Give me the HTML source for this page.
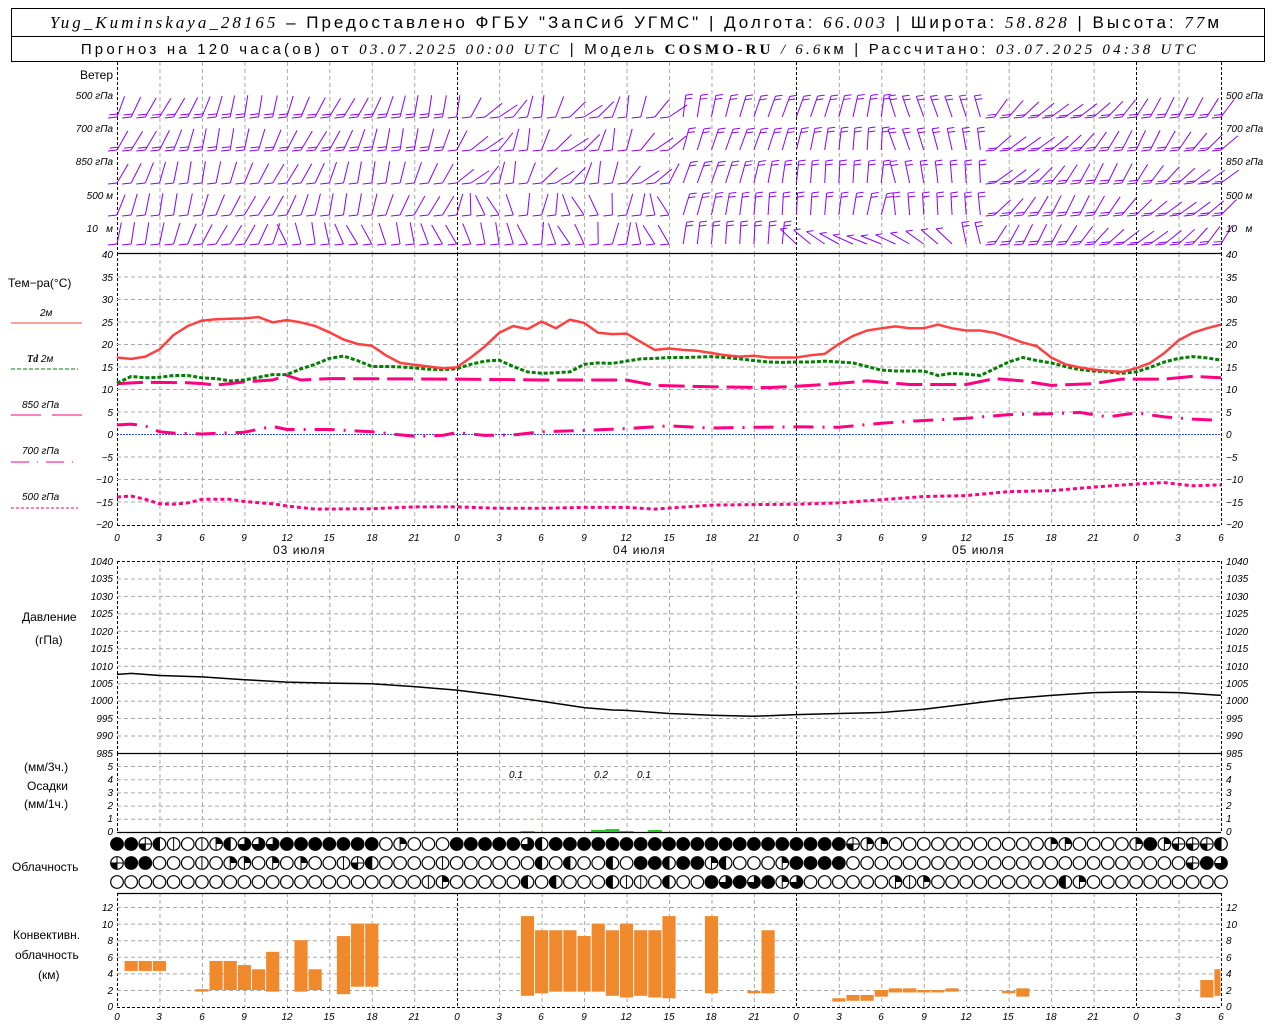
<!DOCTYPE html>
<html><head><meta charset="utf-8"><style>
html,body{margin:0;padding:0;background:#fff;}
svg{display:block;font-family:"Liberation Sans",sans-serif;}
.t{font-size:10px;font-style:italic;fill:#000;}
.l{font-size:12px;fill:#000;}
.hd{font-size:17px;fill:#000;}
.hd2{font-size:15px;fill:#000;}
.it{font-family:"Liberation Serif",serif;font-style:italic;}
</style></head><body>
<svg id="s" width="1280" height="1024" viewBox="0 0 1280 1024" xmlns="http://www.w3.org/2000/svg">
<rect x="0" y="0" width="1280" height="1024" fill="#fff"/>
<g id="g"></g>
<rect x="11.5" y="8.5" width="1253" height="53" fill="none" stroke="#000"/>
<line x1="11" y1="36.5" x2="1265" y2="36.5" stroke="#000"/>
<text class="hd" x="636" y="28" text-anchor="middle" letter-spacing="3.0"><tspan class="it">Yug_Kuminskaya_28165</tspan> – Предоставлено ФГБУ "ЗапСиб УГМС" | Долгота: <tspan class="it">66.003</tspan> | Широта: <tspan class="it">58.828</tspan> | Высота: <tspan class="it">77</tspan>м</text>
<text class="hd2" x="640" y="54" text-anchor="middle" letter-spacing="3.2"><tspan>Прогноз на 120 часа(ов) от </tspan><tspan class="it">03.07.2025 00:00 UTC</tspan> | Модель <tspan font-family="Liberation Serif" font-weight="bold">COSMO-RU</tspan> <tspan class="it">/ 6.6</tspan>км | Рассчитано: <tspan class="it">03.07.2025 04:38 UTC</tspan></text>
<text class="l" x="113" y="79" text-anchor="end">Ветер</text>
<g class="t">
<text x="113" y="99" text-anchor="end">500 гПа</text>
<text x="113" y="132" text-anchor="end">700 гПа</text>
<text x="113" y="165" text-anchor="end">850 гПа</text>
<text x="113" y="199" text-anchor="end">500 м</text>
<text x="113" y="232" text-anchor="end">10 &#160;&#160;м</text>
<text x="1226" y="99">500 гПа</text>
<text x="1226" y="132">700 гПа</text>
<text x="1226" y="165">850 гПа</text>
<text x="1226" y="199">500 м</text>
<text x="1226" y="232">10 &#160;&#160;м</text>
</g>
<text class="l" x="8" y="287">Тем−ра(°C)</text>
<text class="t" x="40" y="316" font-style="normal">2м</text>
<line x1="11" y1="323" x2="82" y2="323" stroke="#ff4040"/>
<text class="t" x="27" y="362"><tspan font-weight="bold" class="it">Td</tspan>  2м</text>
<line x1="11" y1="369" x2="78" y2="369" stroke="#008000" stroke-dasharray="4 2"/>
<text class="t" x="22" y="408">850 гПа</text>
<line x1="11" y1="415" x2="82" y2="415" stroke="#ff0080" stroke-dasharray="30 11"/>
<text class="t" x="22" y="454">700 гПа</text>
<line x1="11" y1="462" x2="78" y2="462" stroke="#ff0080" stroke-dasharray="18 8 1 8"/>
<text class="t" x="22" y="500">500 гПа</text>
<line x1="11" y1="508" x2="78" y2="508" stroke="#ff0080" stroke-dasharray="3 2"/>
<text class="l" x="22" y="621">Давление</text>
<text class="l" x="35" y="644">(гПа)</text>
<text class="l" x="24" y="771">(мм/3ч.)</text>
<text class="l" x="27" y="790">Осадки</text>
<text class="l" x="24" y="808">(мм/1ч.)</text>
<text class="l" x="12" y="871">Облачность</text>
<text class="l" x="13" y="939">Конвективн.</text>
<text class="l" x="15" y="959">облачность</text>
<text class="l" x="38" y="979">(км)</text>
<g class="t" text-anchor="end">
<text x="113" y="258">40</text><text x="113" y="281">35</text><text x="113" y="303">30</text><text x="113" y="326">25</text><text x="113" y="348">20</text><text x="113" y="371">15</text><text x="113" y="393">10</text><text x="113" y="416">5</text><text x="113" y="438">0</text><text x="113" y="461">−5</text><text x="113" y="483">−10</text><text x="113" y="506">−15</text><text x="113" y="528">−20</text>
</g>
<g class="t">
<text x="1226" y="258">40</text><text x="1226" y="281">35</text><text x="1226" y="303">30</text><text x="1226" y="326">25</text><text x="1226" y="348">20</text><text x="1226" y="371">15</text><text x="1226" y="393">10</text><text x="1226" y="416">5</text><text x="1226" y="438">0</text><text x="1226" y="461">−5</text><text x="1226" y="483">−10</text><text x="1226" y="506">−15</text><text x="1226" y="528">−20</text>
</g>
<g class="t" text-anchor="end" font-size="9">
<text x="113" y="565">1040</text><text x="113" y="582">1035</text><text x="113" y="600">1030</text><text x="113" y="617">1025</text><text x="113" y="635">1020</text><text x="113" y="652">1015</text><text x="113" y="670">1010</text><text x="113" y="687">1005</text><text x="113" y="704">1000</text><text x="113" y="722">995</text><text x="113" y="739">990</text><text x="113" y="757">985</text>
</g>
<g class="t" font-size="9">
<text x="1226" y="565">1040</text><text x="1226" y="582">1035</text><text x="1226" y="600">1030</text><text x="1226" y="617">1025</text><text x="1226" y="635">1020</text><text x="1226" y="652">1015</text><text x="1226" y="670">1010</text><text x="1226" y="687">1005</text><text x="1226" y="704">1000</text><text x="1226" y="722">995</text><text x="1226" y="739">990</text><text x="1226" y="757">985</text>
</g>
<g class="t" text-anchor="end" font-size="9">
<text x="113" y="770">5</text><text x="113" y="783">4</text><text x="113" y="796">3</text><text x="113" y="809">2</text><text x="113" y="822">1</text><text x="113" y="835">0</text>
</g>
<g class="t" font-size="9">
<text x="1226" y="770">5</text><text x="1226" y="783">4</text><text x="1226" y="796">3</text><text x="1226" y="809">2</text><text x="1226" y="822">1</text><text x="1226" y="835">0</text>
</g>
<g class="t" font-size="13"><text x="509" y="778">0.1</text><text x="594" y="778">0.2</text><text x="637" y="778">0.1</text></g>
<g class="t" text-anchor="end">
<text x="113" y="911">12</text><text x="113" y="928">10</text><text x="113" y="944">8</text><text x="113" y="961">6</text><text x="113" y="977">4</text><text x="113" y="994">2</text><text x="113" y="1010">0</text>
</g>
<g class="t">
<text x="1226" y="911">12</text><text x="1226" y="928">10</text><text x="1226" y="944">8</text><text x="1226" y="961">6</text><text x="1226" y="977">4</text><text x="1226" y="994">2</text><text x="1226" y="1010">0</text>
</g>
<g class="t" font-size="15" text-anchor="middle">
<text x="117" y="541">0</text><text x="159" y="541">3</text><text x="202" y="541">6</text><text x="244" y="541">9</text><text x="287" y="541">12</text><text x="329" y="541">15</text><text x="372" y="541">18</text><text x="414" y="541">21</text>
<text x="457" y="541">0</text><text x="499" y="541">3</text><text x="541" y="541">6</text><text x="584" y="541">9</text><text x="626" y="541">12</text><text x="669" y="541">15</text><text x="711" y="541">18</text><text x="754" y="541">21</text>
<text x="796" y="541">0</text><text x="839" y="541">3</text><text x="881" y="541">6</text><text x="924" y="541">9</text><text x="966" y="541">12</text><text x="1008" y="541">15</text><text x="1051" y="541">18</text><text x="1093" y="541">21</text>
<text x="1136" y="541">0</text><text x="1178" y="541">3</text><text x="1221" y="541">6</text>
</g>
<g class="l" font-size="14"><text x="273" y="554" letter-spacing="1">03 <tspan font-size="12">июля</tspan></text><text x="613" y="554" letter-spacing="1">04 <tspan font-size="12">июля</tspan></text><text x="952" y="554" letter-spacing="1">05 <tspan font-size="12">июля</tspan></text></g>
<g class="t" font-size="15" text-anchor="middle">
<text x="117" y="1020">0</text><text x="159" y="1020">3</text><text x="202" y="1020">6</text><text x="244" y="1020">9</text><text x="287" y="1020">12</text><text x="329" y="1020">15</text><text x="372" y="1020">18</text><text x="414" y="1020">21</text>
<text x="457" y="1020">0</text><text x="499" y="1020">3</text><text x="541" y="1020">6</text><text x="584" y="1020">9</text><text x="626" y="1020">12</text><text x="669" y="1020">15</text><text x="711" y="1020">18</text><text x="754" y="1020">21</text>
<text x="796" y="1020">0</text><text x="839" y="1020">3</text><text x="881" y="1020">6</text><text x="924" y="1020">9</text><text x="966" y="1020">12</text><text x="1008" y="1020">15</text><text x="1051" y="1020">18</text><text x="1093" y="1020">21</text>
<text x="1136" y="1020">0</text><text x="1178" y="1020">3</text><text x="1221" y="1020">6</text>
</g>
</svg>
<script>
(function(){
var NS="http://www.w3.org/2000/svg",g=document.getElementById("g");
function el(n,a){var e=document.createElementNS(NS,n);for(var k in a)e.setAttribute(k,a[k]);g.appendChild(e);return e;}
var X0=117,X1=1221,K=(X1-X0)/78;function X(h){return X0+h*K;}
function ln(x1,y1,x2,y2,s,w,d){var a={x1:x1,y1:y1,x2:x2,y2:y2,stroke:s,"stroke-width":w||1};if(d)a["stroke-dasharray"]=d;el("line",a);}
var gray="#a8a8a8",gd="4 3";
var P=[[62,253],[253,525],[561,753],[753,832],[893,1007]];
P.forEach(function(p){for(var h=3;h<78;h+=3){if(h%24==0)continue;ln(X(h)+.5,p[0],X(h)+.5,p[1],gray,1,gd);}
 [0,24,48,72,78].forEach(function(h){ln(Math.round(X(h))+.5,p[0],Math.round(X(h))+.5,p[1],"#000",1,"3 2");});});
function Ty(t){return 254+(40-t)*4.5;}
for(var t=35;t>-20;t-=5){if(t==0)continue;ln(117,Ty(t)+.5,1221,Ty(t)+.5,gray,1,gd);}
ln(117,Ty(0)+.5,1221,Ty(0)+.5,"#3050ff",1,"2 1");
ln(117,253.5,1221,253.5,"#000",1.2);ln(117,525.5,1221,525.5,"#000",1,"3 2");
function Py(p){return 561+(1040-p)*3.49;}
for(var p=1035;p>985;p-=5)ln(117,Py(p)+.5,1221,Py(p)+.5,gray,1,gd);
ln(117,561.5,1221,561.5,"#000",1,"3 2");ln(117,753.5,1221,753.5,"#000",1.2);
for(var m=1;m<=5;m++)ln(117,832-m*13.2+.5,1221,832-m*13.2+.5,gray,1,gd);
ln(117,832.5,1221,832.5,"#000",1.2);
function Cy(k){return 1006.6-k*8.3;}
for(var k=2;k<=12;k+=2)ln(117,Cy(k)+.5,1221,Cy(k)+.5,gray,1,gd);
ln(117,893.5,1221,893.5,"#000",1.2);ln(117,1007.5,1221,1007.5,"#000",1,"3 2");
function poly(d,fy,s,w,da){var pts=d.map(function(q){return X(q[0]).toFixed(1)+","+fy(q[1]).toFixed(1);}).join(" ");var a={points:pts,fill:"none",stroke:s,"stroke-width":w,"stroke-linejoin":"round"};if(da)a["stroke-dasharray"]=da;el("polyline",a);}
function arr(a){return a.map(function(v,i){return [i,v];});}
var T=[17,16.7,17.2,18.8,22,24,25.2,25.5,25.6,25.7,26,24.8,25.3,24.8,24,22.6,21,20,19.6,17.5,15.8,15.4,15,14.6,14.8,17,19.5,22.5,24,23.3,25,23.5,25.4,24.7,22.5,22.2,22.3,20.5,18.7,19,18.7,18.5,18,17.5,17.2,17.4,17,17,17,17.5,17.8,20,21.8,23,23.5,23.9,23.5,23.5,24.3,23.5,23,23,22.5,21.5,20.3,19.5,17,15.5,14.8,14.3,14,13.8,14.6,15.8,18,20.8,22.5,23.5,24.3];
var Td=[11.3,12.8,12.5,12.6,13,13,12.5,12.3,11.8,12,12.6,13.2,13.2,14.5,15.5,16.8,17.3,16.3,15,15,14.9,14.7,14.4,14.3,14.5,15.5,16.2,16.4,15,13.8,13.5,13.6,13.8,15.5,15.8,15.7,16.2,16.7,16.8,17,17,17.1,17.2,17,16.7,16.3,16,15.9,16,16,16.2,16,15.8,15,14.2,14,14,14,13,13.5,13.3,13,14.5,16,17,16.3,15.8,15,14.3,14,13.8,13.5,13.8,14.8,16,16.8,17.2,16.9,16.4];
poly([[0,11.2],[2,11.5],[5,11.4],[6,11.2],[7,10.9],[8,11.2],[9,11.6],[11,12],[12,13],[13,12],[15,12.3],[24,12.2],[30,12],[36,12],[38,10.8],[42,10.5],[46,10.3],[48,10.6],[50,11],[53,11.8],[56,11],[60,11],[62,12.3],[64,11.8],[66,10.8],[69,11.2],[71,12.2],[74,12.2],[76,12.8],[78,12.5]],Ty,"#ff0080",3,"26 8");
poly([[0,2],[1,2.2],[2,1.8],[3,0.5],[4,0.2],[6,0],[9,0.4],[11,1.7],[12,1],[15,1],[18,0.5],[21,-0.5],[23,-0.3],[24,0.3],[26,-0.3],[28,-0.2],[30,0.5],[33,0.8],[36,1.2],[39,1.8],[42,1.3],[45,1.5],[48,1.6],[51,1.5],[54,2.4],[57,3],[60,3.5],[63,4.3],[66,4.5],[68,4.8],[70,3.8],[72,4.7],[74,3.8],[76,3.3],[78,3]],Ty,"#ff0080",3,"20 9 2 9");
poly([[0,-14],[1,-13.8],[2,-14.5],[3,-15.5],[4,-15.6],[5,-15.3],[6,-14.5],[8,-14.5],[9,-15],[11,-15.5],[12,-16],[14,-16.7],[18,-16.6],[21,-16.2],[24,-16.2],[27,-16.5],[30,-16.5],[33,-16.3],[36,-16.3],[38,-16.7],[42,-15.8],[45,-15.7],[48,-15.6],[51,-15.3],[54,-14.6],[57,-13.9],[60,-13.7],[63,-12.8],[66,-12.6],[69,-11.8],[72,-11.1],[74,-10.8],[76,-11.5],[78,-11.3]],Ty,"#ff0080",3,"4 3");
poly(arr(Td),Ty,"#008000",3,"4 2");
poly(arr(T),Ty,"#ff4040",2.5);
poly([[0,1007.5],[1,1007.8],[3,1007.2],[6,1006.8],[9,1006],[12,1005.3],[15,1005],[18,1004.8],[21,1004],[24,1003],[27,1001.5],[30,999.8],[33,998],[35,997.3],[36,997.2],[39,996.3],[42,995.8],[45,995.5],[48,996],[51,996.3],[54,996.6],[57,997.5],[60,999],[63,1000.5],[66,1001.5],[69,1002.3],[72,1002.5],[75,1002.3],[78,1001.5]],Py,"#000",1.5);
[[28.5,29.5,1],[33.5,34.5,2],[34.5,35.5,3],[35.5,36.5,1],[37.5,38.5,2]].forEach(function(b){el("rect",{x:X(b[0]),y:832-b[2],width:K,height:b[2],fill:"#22cc22"});});
var B=[[.5,1.5,5.5,4.3],[1.5,2.5,5.5,4.3],[2.5,3.5,5.5,4.3],[5.5,6.5,2.1,1.8],[6.5,7.5,5.5,2],[7.5,8.5,5.5,2],[8.5,9.5,5,2],[9.5,10.5,4.5,2],[10.5,11.5,6.6,1.8],[12.5,13.5,8,1.8],[13.5,14.5,4.5,2],[15.5,16.5,8.5,1.5],[16.5,17.5,10,2.4],[17.5,18.5,10,2.4],
[28.5,29.5,10.9,1.3],[29.5,30.5,9.2,1.6],[30.5,31.5,9.2,1.8],[31.5,32.5,9.2,1.8],[32.5,33.5,8.5,1.8],[33.5,34.5,10,1.8],[34.5,35.5,9.2,1.3],[35.5,36.5,10,1.1],[36.5,37.5,9.2,1.3],[37.5,38.5,9.2,1.1],[38.5,39.5,10.9,1],[41.5,42.5,10.9,1.6],[44.5,45.5,1.9,1.6],[45.5,46.5,9.2,1.6],
[50.5,51.5,1,0.6],[51.5,52.5,1.4,.7],[52.5,53.5,1.4,.7],[53.5,54.5,2,1.2],[54.5,55.5,2.2,1.7],[55.5,56.5,2.2,1.7],[56.5,57.5,2,1.7],[57.5,58.5,2,1.7],[58.5,59.5,2.2,1.8],[62.5,63.5,1.9,1.6],[63.5,64.5,2.2,1.2],[76.5,77.5,3.2,1.1],[77.5,78,4.5,1.3]];
B.forEach(function(b){el("rect",{x:X(b[0])+0.5,y:Cy(b[2]),width:(b[1]-b[0])*K-1,height:Cy(b[3])-Cy(b[2]),fill:"#f0882c"});});
var R=[
"ffxhvevqhttt fffffffe qeeefffff thfffffffffffffffffffffxqqeeeeeeeeeeeqqeeeeqfqxxxhf",
"xffeeeveqqeqeqeevxheeeevee eeeeheheeheffhffqheeeqffffeeeeeeeeeeeeeeeeeeeeeeeexftff",
"eeeeeeeeeeeeeeeeeeeeeevqeeeeeheheeehvveheeftftfqteeeeeeqvqeeeeeeeeehqeeeeeeeeeeeeq"];
R=R.map(function(s){return s.replace(/ /g,"");});
var cy=[844,863,882],r=6.3;
function pie(cx,cyy,a0,a1){var p="M"+cx+","+cyy;var x0=cx+r*Math.sin(a0),y0=cyy-r*Math.cos(a0),x1=cx+r*Math.sin(a1),y1=cyy-r*Math.cos(a1);var large=(a1-a0)>Math.PI?1:0;el("path",{d:p+"L"+x0+","+y0+"A"+r+","+r+" 0 "+large+" 1 "+x1+","+y1+"Z",fill:"#000"});}
R.forEach(function(s,ri){for(var i=0;i<=78;i++){var c=s[i]||"e",cx=X(i),yy=cy[ri];
 el("circle",{cx:cx,cy:yy,r:r,fill:c=="f"?"#000":"#fff",stroke:"#000","stroke-width":1.2});
 if(c=="q")pie(cx,yy,0,Math.PI/2);
 if(c=="h")pie(cx,yy,Math.PI,2*Math.PI);
 if(c=="t")pie(cx,yy,0,Math.PI*1.5-0.001);
 if(c=="v"||c=="h"||c=="q")ln(cx,yy-r,cx,yy+r,"#000",1);
 if(c=="x"){ln(cx-r,yy,cx+r,yy,"#000",1);pie(cx,yy,Math.PI,1.5*Math.PI);ln(cx,yy-r,cx,yy+r,"#000",1);}
}});
var lv=[117,150,183,215,244];
var col="#8a00ff";
for(var L=0;L<5;L++){for(var h=0;h<=78;h++){
 var x=X(h),yb=lv[L],ang,n,top=false;
 if(h<24){ang=0.35+0.2*Math.sin(h*0.5+L);n=L<2?2:1;}
 else if(h<40){ang=(L>2?-0.15:0.55)+0.45*Math.sin(h+L);n=1;}
 else if(h<62){ang=0.2+0.15*Math.sin(h*0.3+L)+(h>54?-0.4:0);n=2;top=true;}
 else {ang=0.7+0.25*Math.sin(h*0.4+L);n=2;}
 if(L==4&&h>=12&&h<30){ang=-0.35+0.2*Math.sin(h);n=1;}
 if(L==4&&h>=48&&h<60){ang=-1.0-0.2*Math.sin(h*0.5);n=1;}
 var len=22,tx=x+len*Math.sin(ang),ty=yb-len*Math.cos(ang);
 ln(x,yb,tx,ty,col,1);
 for(var j=0;j<n;j++){
  if(top){var fx=tx+(x-tx)*j*0.18,fy=ty+(yb-ty)*j*0.18;ln(fx,fy,fx+7,fy-1,col,1);}
  else{var fx2=x+(tx-x)*j*0.15,fy2=yb+(ty-yb)*j*0.15;ln(fx2,fy2,fx2-9,fy2+1,col,1);}
 }
}}
})();
</script>
</body></html>
